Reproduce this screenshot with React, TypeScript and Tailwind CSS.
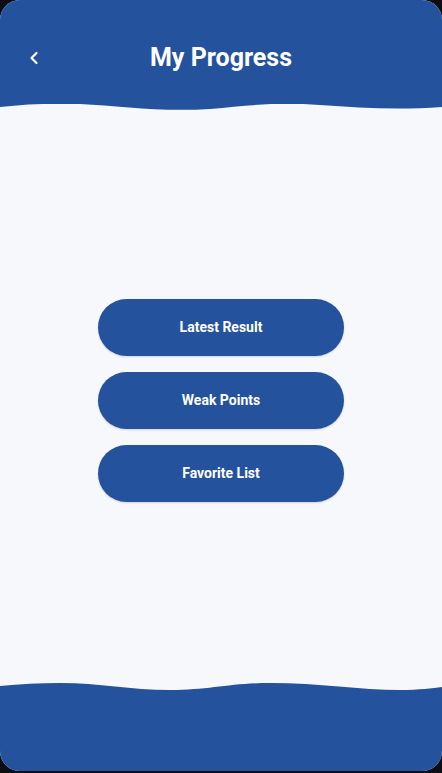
import { ChevronLeft } from 'lucide-react';

const BLUE = '#24529c';

function TopWave() {
  return (
    <svg viewBox="0 0 442 10" preserveAspectRatio="none" className="block w-full h-[10px] -mt-px">
      <path
        d="M0 4 C 25 1, 50 0, 80 1 C 120 3, 160 9, 210 6 C 250 2, 280 -1, 320 2 C 360 5, 400 7, 442 4 L 442 0 L 0 0 Z"
        fill={BLUE}
      />
    </svg>
  );
}

function BottomWave() {
  return (
    <svg viewBox="0 0 442 10" preserveAspectRatio="none" className="block w-full h-[10px] -mb-px">
      <path
        d="M0 4 C 20 2, 40 1, 60 1 C 100 1, 130 8, 170 8 C 210 8, 230 1, 270 1 C 320 1, 360 8, 400 8 C 420 8, 432 6, 442 5 L 442 10 L 0 10 Z"
        fill={BLUE}
      />
    </svg>
  );
}

export default function App() {
  const items = ['Latest Result', 'Weak Points', 'Favorite List'];
  return (
    <div className="w-[442px] h-[773px] bg-[#0d0d14] overflow-hidden" style={{ fontFamily: 'Roboto, "Liberation Sans", sans-serif' }}>
      <div className="h-[771px] rounded-[20px] overflow-hidden bg-[#f7f8fb] flex flex-col">
        {/* Header */}
        <div className="bg-[#24529c] h-[104px] relative flex items-start justify-center">
          <button className="absolute left-[24px] top-[48px] text-white">
            <ChevronLeft size={20} strokeWidth={2.6} />
          </button>
          <h1 className="text-white font-bold text-[25px] leading-[30px] mt-[43px]">My Progress</h1>
        </div>
        <TopWave />

        {/* Menu */}
        <div className="flex-1 flex flex-col items-center justify-center gap-4 pt-[5px]">
          {items.map((label) => (
            <button
              key={label}
              className="w-[246px] h-[57px] rounded-full bg-[#24529c] text-white font-bold text-[14px] shadow-[0_1px_2px_rgba(0,0,0,0.15)]"
            >
              {label}
            </button>
          ))}
        </div>

        {/* Footer */}
        <BottomWave />
        <div className="bg-[#24529c] h-[80px]" />
      </div>
    </div>
  );
}
